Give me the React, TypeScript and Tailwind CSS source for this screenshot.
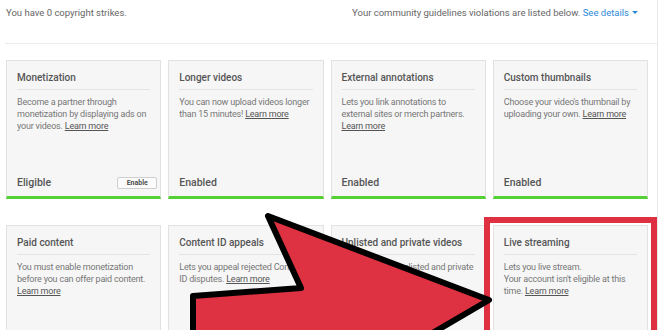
const features = [
  {
    title: "Monetization",
    body: "Become a partner through monetization by displaying ads on your videos.",
    status: "Eligible",
    button: true,
  },
  {
    title: "Longer videos",
    body: "You can now upload videos longer than 15 minutes!",
    status: "Enabled",
  },
  {
    title: "External annotations",
    body: "Lets you link annotations to external sites or merch partners.",
    status: "Enabled",
  },
  {
    title: "Custom thumbnails",
    body: "Choose your video's thumbnail by uploading your own.",
    status: "Enabled",
  },
  {
    title: "Paid content",
    body: "You must enable monetization before you can offer paid content.",
  },
  {
    title: "Content ID appeals",
    body: "Lets you appeal rejected Content ID disputes.",
  },
  {
    title: "Unlisted and private videos",
    body: "Lets you make unlisted and private videos.",
  },
  {
    title: "Live streaming",
    body: "Lets you live stream.",
    extra: "Your account isn't eligible at this time.",
  },
];

type Feature = (typeof features)[number] & { button?: boolean; extra?: string; status?: string };

function Card({ f }: { f: Feature }) {
  return (
    <div
      className={`flex h-[139px] flex-col border border-[#e2e2e2] bg-[#f6f6f6] ${
        f.status ? "border-b-[3px] border-b-[#55d136]" : ""
      }`}
    >
      <div className="mx-[10px] mt-[10px] border-b border-[#e4e4e4] pb-[4px] text-[10px] font-medium leading-[14px] text-[#555]">
        {f.title}
      </div>
      <p className="mx-[10px] mt-[6px] flex-1 text-[9px] leading-[12px] tracking-[-0.2px] text-[#777]">
        {f.extra ? (
          <>
            {f.body}
            <br />
            {f.extra}{" "}
          </>
        ) : (
          <>{f.body} </>
        )}
        <span className="text-[#555] underline">Learn more</span>
      </p>
      {f.status && (
        <div className="flex items-center justify-between pb-[6px] pl-[10px] pr-[3px]">
          <span className="text-[10.5px] font-medium leading-[14px] text-[#555]">{f.status}</span>
          {f.button && (
            <span className="flex h-[12px] w-[40px] items-center justify-center rounded-[2px] border border-[#cfcfcf] bg-[#fbfbfb] text-[7px] font-semibold text-[#444]">
              Enable
            </span>
          )}
        </div>
      )}
    </div>
  );
}

export default function App() {
  return (
    <div className="relative h-[330px] w-[660px] overflow-hidden bg-white font-['Roboto',sans-serif]">
      <div className="ml-[5px] h-full w-[653px] border-r border-[#e8e8e8]">
        {/* Header row */}
        <div className="flex h-[26px] items-center justify-between pl-[1px] pr-[19px] text-[9.5px] text-[#666]">
          <span>You have 0 copyright strikes.</span>
          <span>
            Your community guidelines violations are listed below.{" "}
            <span className="text-[#2f8ad8]">See details</span>
            <span className="ml-[3px] inline-block translate-y-[-1px] border-x-[3px] border-t-[3px] border-x-transparent border-t-[#2f8ad8] align-middle" />
          </span>
        </div>
        <div className="mt-[17px] border-t border-[#ececec]" />

        {/* Feature cards */}
        <div className="grid w-[643px] grid-cols-4 gap-x-[7px] gap-y-[26px] pl-[1px] pt-[16px]">
          {features.map((f, i) => (
            <Card key={i} f={f as Feature} />
          ))}
        </div>
      </div>

      {/* Highlight box */}
      <div className="pointer-events-none absolute left-[484px] top-[217px] h-[140px] w-[173px] border-[6px] border-[#de3040]" />

      {/* Arrow */}
      <svg className="pointer-events-none absolute left-0 top-0" width="660" height="330" viewBox="0 0 660 330">
        <path
          d="M193 345 L193 296 L301 288 L268 216 L489 300 L412 345 Z"
          fill="#de3141"
          stroke="#000"
          strokeWidth="6"
          strokeLinejoin="round"
        />
      </svg>
    </div>
  );
}
